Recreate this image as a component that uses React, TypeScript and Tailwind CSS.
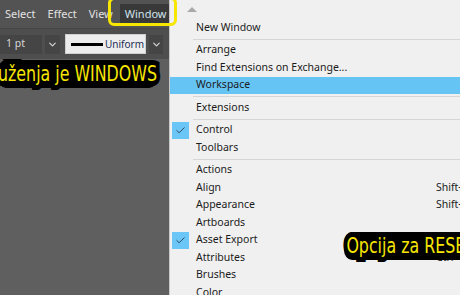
import { ChevronDown, Check } from 'lucide-react'

type Item = { label: string; shortcut?: string; checked?: boolean; active?: boolean }

// grupe stavki, između grupa ide separator
const GROUPS: Item[][] = [
  [{ label: 'New Window' }],
  [{ label: 'Arrange' }, { label: 'Find Extensions on Exchange...' }, { label: 'Workspace', active: true }],
  [{ label: 'Extensions' }],
  [{ label: 'Control', checked: true }, { label: 'Toolbars' }],
  [
    { label: 'Actions' },
    { label: 'Align', shortcut: 'Shift+F7' },
    { label: 'Appearance', shortcut: 'Shift+F6' },
    { label: 'Artboards' },
    { label: 'Asset Export', checked: true },
    { label: 'Attributes', shortcut: 'Ctrl+F11' },
    { label: 'Brushes' },
    { label: 'Color' },
  ],
]

const UI_FONT = "font-['Noto_Sans','Open_Sans',sans-serif]"
const LABEL =
  "font-['DejaVu_Sans_Condensed','Liberation_Sans',sans-serif] text-[22px] leading-none text-[#f6e600] [-webkit-text-stroke:10px_#000] [paint-order:stroke_fill] whitespace-nowrap origin-left scale-x-[0.8] bg-black rounded-[10px] py-[3px]"

function MenuRow({ item }: { item: Item }) {
  return (
    <div className={`relative flex items-center h-[17.5px] ${item.active ? 'bg-[#66c4f5]' : ''}`}>
      <div className="w-[26px] h-full flex items-center pl-[2px]">
        {item.checked && (
          <div className="w-[17px] h-[17px] bg-[#6ac6f6] flex items-center justify-center">
            <Check size={11} strokeWidth={2} className="text-[#2a3a4a]" />
          </div>
        )}
      </div>
      <span className="text-[10.5px] text-[#1b1b1b] flex-1">{item.label}</span>
      {item.shortcut && (
        <span className="absolute left-[266px] text-[10.5px] text-[#1b1b1b]">{item.shortcut}</span>
      )}
    </div>
  )
}

export default function App() {
  return (
    <div className={`relative w-[460px] h-[295px] overflow-hidden flex ${UI_FONT}`}>
      {/* lijevo: Illustrator sučelje */}
      <div className="w-[169px] shrink-0 flex flex-col bg-[#5f5f5f] overflow-hidden">
        <div className="h-[28px] bg-[#535353] flex items-center text-[11px] text-[#e2e2e2] whitespace-nowrap">
          <span className="ml-[5px]">Select</span>
          <span className="ml-[12px]">Effect</span>
          <span className="ml-[12px]">View</span>
          <span className="ml-[7px] px-[5px] py-[2px] bg-[#393939] text-[#cfe2ee]">Window</span>
        </div>
        <div className="h-[31px] bg-[#4e4e4e] border-t border-[#464646] flex items-center gap-[3px]">
          <div className="w-[42px] h-[19px] bg-[#454545] flex items-center pl-[6px] text-[10.5px] text-[#d8d8d8]">1 pt</div>
          <div className="w-[15px] h-[19px] bg-[#454545] flex items-center justify-center">
            <ChevronDown size={11} strokeWidth={2.5} className="text-[#d8d8d8]" />
          </div>
          <div className="ml-[2px] w-[81px] h-[20px] bg-[#ededed] border border-[#d0d0d0] flex items-center gap-[2px] pl-[5px] overflow-hidden">
            <div className="w-[32px] h-[3px] bg-black shrink-0" />
            <span className="text-[10px] text-[#1e2d57] whitespace-nowrap">Uniform</span>
          </div>
          <div className="w-[14px] h-[19px] bg-[#454545] flex items-center justify-center">
            <ChevronDown size={11} strokeWidth={2.5} className="text-[#d8d8d8]" />
          </div>
        </div>
        <div className="flex-1" />
      </div>

      {/* desno: padajući izbornik Window */}
      <div className="flex-1 bg-[#f0f0f0] border-l border-[#c9c9c9] min-w-0">
        <div className="w-[420px]">
          <div className="h-[19px] flex items-center pl-[17px]">
            <div className="w-0 h-0 border-l-[5px] border-r-[5px] border-b-[5px] border-l-transparent border-r-transparent border-b-[#a8a8a8]" />
          </div>
          {GROUPS.map((group, gi) => (
            <div key={gi}>
              {gi > 0 && (
                <div className="h-[5px] flex items-center pl-[23px]">
                  <div className="w-full h-px bg-[#d6d6d6]" />
                </div>
              )}
              {group.map(item => <MenuRow key={item.label} item={item} />)}
            </div>
          ))}
        </div>
      </div>

      {/* žuti okvir oko Window */}
      <div className="absolute left-[108px] top-[-3px] w-[69px] h-[29px] border-[3px] border-[#f6e600] rounded-[6px]" />

      {/* natpisi */}
      <div className={`absolute left-[-2px] top-[60px] ${LABEL}`}>uženja je WINDOWS</div>
      <div className={`absolute left-[344px] top-[232px] pl-[3px] ${LABEL}`}>Opcija za RESET</div>
    </div>
  )
}
